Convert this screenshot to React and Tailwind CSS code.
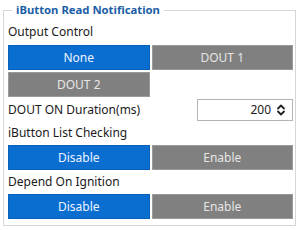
import React, { useState } from 'react';

const FONT = { fontFamily: '"Noto Sans", "Open Sans", sans-serif' };

function Toggle({ options, value, onChange }) {
  return (
    <div className="grid grid-cols-2 gap-[2px]">
      {options.map((opt) => (
        <button
          key={opt}
          onClick={() => onChange(opt)}
          className={`h-[25px] text-[12px] border ${value === opt
            ? 'bg-[#0a6ed1] border-[#0a62b8] text-[#eef4ff]'
            : 'bg-[#808080] border-[#9a9a9a] text-[#e6e6e6]'
            }`}
        >
          {opt}
        </button>
      ))}
    </div>
  );
}

function Spinner() {
  return (
    <svg width="10" height="12" viewBox="0 0 10 12" fill="none" stroke="#222" strokeWidth="1.8" strokeLinecap="round" strokeLinejoin="round">
      <path d="M2 4.5 L5 1.5 L8 4.5" />
      <path d="M2 7.5 L5 10.5 L8 7.5" />
    </svg>
  );
}

export default function App() {
  const [output, setOutput] = useState('None');
  const [duration, setDuration] = useState(200);
  const [listCheck, setListCheck] = useState('Disable');
  const [ignition, setIgnition] = useState('Disable');

  return (
    <div className="w-[300px] h-[230px] bg-white text-[#1a1a1a] pl-[3px] pr-[4px]" style={FONT}>
      <fieldset className="border border-[#d6d6d6] pl-[4px] pr-[2px] pb-[6px]">
        <legend className="ml-[4px] px-[4px] text-[11.3px] font-bold text-[#1b5ea6] leading-[20px]">
          iButton Read Notification
        </legend>

        <div className="h-[24px] flex items-center text-[12px]">Output Control</div>
        <div className="mt-[1px] grid grid-cols-2 gap-[2px]">
          {['None', 'DOUT 1', 'DOUT 2'].map((opt) => (
            <button
              key={opt}
              onClick={() => setOutput(opt)}
              className={`h-[25px] text-[12px] border ${output === opt
                ? 'bg-[#0a6ed1] border-[#0a62b8] text-[#eef4ff]'
                : 'bg-[#808080] border-[#9a9a9a] text-[#e6e6e6]'
                }`}
            >
              {opt}
            </button>
          ))}
        </div>

        <div className="mt-[2px] h-[22px] flex items-center justify-between text-[12px]">
          <span>DOUT ON Duration(ms)</span>
          <div className="w-[96px] h-[22px] border border-[#b4b4b4] flex items-center justify-end pr-[6px] gap-[5px]">
            <input
              value={duration}
              onChange={(e) => setDuration(e.target.value)}
              className="w-[60px] text-right outline-none text-[12px]"
            />
            <Spinner />
          </div>
        </div>

        <div className="h-[24px] flex items-center text-[12px]">iButton List Checking</div>
        <Toggle options={['Disable', 'Enable']} value={listCheck} onChange={setListCheck} />

        <div className="h-[24px] flex items-center text-[12px]">Depend On Ignition</div>
        <Toggle options={['Disable', 'Enable']} value={ignition} onChange={setIgnition} />
      </fieldset>
    </div>
  );
}
